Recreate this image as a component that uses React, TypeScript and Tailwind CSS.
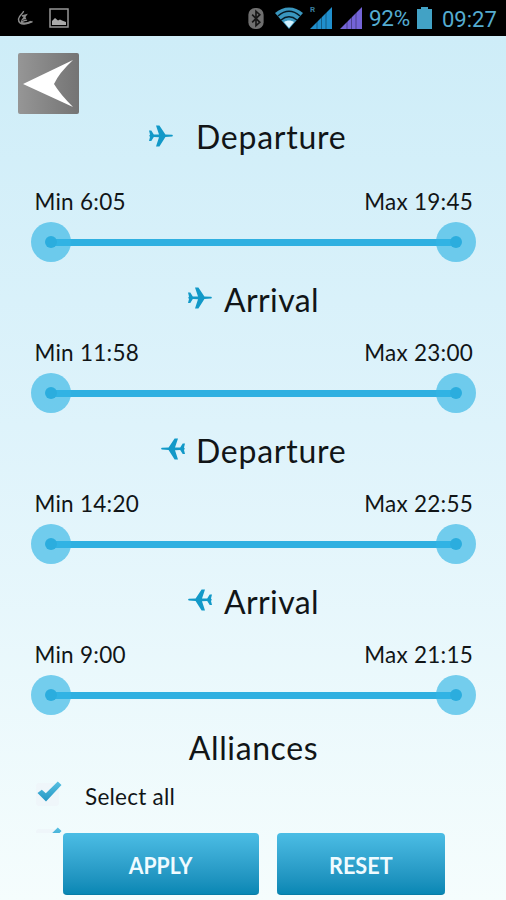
import React from "react";

function Plane({ flip = false }: { flip?: boolean }) {
  return (
    <svg viewBox="0 0 26 24" className={`h-6 w-[26px] ${flip ? "-scale-x-100" : ""}`} fill="#1299c8">
      <path d="M1 6.500h2.300l2.500 4 5.200-.1L8 1.500h3.400l6 9 6.800.3q1.600.9 0 1.800l-6.800.3-6 9.600H8l3-9.300-5.200-.1L3.300 17H1l1-4-.8-1.300.8-1.200z" />
    </svg>
  );
}

function Handle() {
  return (
    <div className="flex size-10 items-center justify-center rounded-full bg-[#33b5e5]/65">
      <div className="size-3 rounded-full bg-[#2badde]" />
    </div>
  );
}

interface RangeProps {
  title: string;
  min: string;
  max: string;
  flip?: boolean;
  wide?: boolean;
  first?: boolean;
}

function Range({ title, min, max, flip, wide, first }: RangeProps) {
  return (
    <section className={first ? "h-[163px]" : "h-[151px]"}>
      <div className={`flex h-10 items-center ${first ? "mb-[29px] pl-[148px]" : wide ? "mb-[17px] pl-[160px]" : "mb-[17px] pl-[187px]"}`}>
        <div className={`shrink-0 ${first ? "mr-[22px] mb-[3px]" : wide ? "mr-[10px] mb-[5px]" : "mr-[11px] mb-[5px]"}`}>
          <Plane flip={flip} />
        </div>
        <h2 className={`whitespace-nowrap text-[32px] leading-10 ${wide ? "tracking-[0.75px]" : "tracking-[0.4px]"}`}>{title}</h2>
      </div>
      <div className="flex h-[30px] items-center justify-between pt-px pr-[33px] pl-[34.500px] text-[22.5px] tracking-[0.25px]">
        <span>Min {min}</span>
        <span>Max {max}</span>
      </div>
      <div className="mr-[30px] ml-[31px] mt-[6px] grid h-10 items-center">
        <div className="col-start-1 row-start-1 mx-5 h-[7px] bg-[#2fb0e1]" />
        <div className="col-start-1 row-start-1 flex justify-between">
          <Handle />
          <Handle />
        </div>
      </div>
    </section>
  );
}

function Check() {
  return (
    <svg viewBox="0 0 30 30" className="size-[30px] shrink-0">
      <defs>
        <linearGradient id="tick" x1="0" y1="0" x2="0" y2="1">
          <stop offset="0" stopColor="#58c0e2" />
          <stop offset="1" stopColor="#2497c4" />
        </linearGradient>
      </defs>
      <rect x="1" y="4" width="23" height="23" rx="3" fill="#eff6fa" />
      <path d="M2.500 14l4.300-3.300 4 3.600L22.800 2.500l3.700 3.500L11 22.500z" fill="url(#tick)" />
    </svg>
  );
}

function Signal({ color }: { color: string }) {
  return (
    <svg viewBox="0 0 22 22" className="h-[22px] w-[22px]">
      <path d="M0 22L22 0v22z" fill={color} />
      <path d="M7 14v8M11.500 9v13M16 5v17" stroke="#000" strokeOpacity=".35" />
    </svg>
  );
}

function StatusBar() {
  return (
    <header className="flex h-9 shrink-0 items-center bg-black font-['Roboto',sans-serif] text-[#55acd0]">
      <svg viewBox="0 0 16 16" className="ml-[17px] h-4 w-4" fill="none" stroke="#8c8c8c" strokeWidth="1.500">
        <path d="M6.500 1C7 3 2 5 1.500 9c-.2 4 3 5.500 6 5 3-.4 5-1.500 8-2.500M5 6l4-1-3 4 3-1M4 11c3 1 4-2 6-.5" />
        <path d="M4 12.500q5 2 10-1" />
      </svg>
      <svg viewBox="0 0 20 20" className="ml-[16px] size-5">
        <rect x="1" y="1" width="18" height="18" fill="none" stroke="#969696" strokeWidth="1.500" />
        <path d="M3 17v-4l3-3 3 2.500 2-1 2 1 4 1.500v3z" fill="#aaa" />
      </svg>
      <svg viewBox="0 0 16 22" className="ml-[179px] h-[21px] w-4">
        <rect width="16" height="22" rx="7" fill="#6f6f6f" />
        <path d="M4 7l8 8-4 3.500v-15L12 7l-8 8" fill="none" stroke="#161616" strokeWidth="1.700" />
      </svg>
      <svg viewBox="0 0 28 22" className="ml-[11px] h-[22px] w-7">
        <path d="M0 6C8-1.500 20-1.500 28 6L14 22z" fill="#3a97bf" />
        <path d="M3 9c7-6 15-6 22 0M6 13c5-4 11-4 16 0" fill="none" stroke="#071a25" strokeWidth="1.600" />
        <path d="M9 15c3-2 7-2 10 0l-5 6z" fill="#d2f2ff" />
      </svg>
      <div className="relative ml-[7px] h-[22px]">
        <Signal color="#208fcd" />
        <span className="absolute top-[-1px] left-0 text-[8px] leading-[8px] font-bold text-[#3a7d9d]">R</span>
      </div>
      <div className="ml-2"><Signal color="#7464d8" /></div>
      <span className="ml-[7px] w-[43px] pt-0.5 text-[22.5px] tracking-[-0.3px]">92%</span>
      <svg viewBox="0 0 15 22" className="ml-[5px] h-[22px] w-[15px]" fill="#42a2c5">
        <path d="M4 0h7v2h4v20H0V2h4z" />
      </svg>
      <span className="ml-[10px] pt-0.5 text-[22px]">09:27</span>
    </header>
  );
}

export default function App() {
  return (
    <div className="flex h-[900px] w-[506px] flex-col overflow-hidden bg-[#f3fcfd] font-['Lato',sans-serif] text-[#111517]">
      <StatusBar />
      <div className="flex min-h-0 flex-1 flex-col bg-linear-to-b from-[#ceedf8] via-[#def3fb] via-45% to-[#f5fdfd]">
        <main className="h-[797px] shrink-0 overflow-hidden">
          <button className="mt-[17px] ml-[18px] block h-[61px] w-[61px] rounded-[2px] bg-linear-to-r from-[#969696] to-[#747474]">
            <svg viewBox="0 0 61 61" className="size-full" fill="#fff">
              <path d="M5 31L55 7Q41 20 36 31q6 10 19 23z" />
            </svg>
          </button>
          <div className="mt-[3px]">
            <Range first wide title="Departure" min="6:05" max="19:45" />
            <Range title="Arrival" min="11:58" max="23:00" />
            <Range wide flip title="Departure" min="14:20" max="22:55" />
            <Range flip title="Arrival" min="9:00" max="21:15" />
          </div>
          <h2 className="-mt-[5px] h-10 pl-px text-center text-[32px] leading-10 tracking-[0.6px]">Alliances</h2>
          <div className="mt-[11px] flex h-[46px] pl-[35px] text-[22.5px] tracking-[0.25px]">
            <Check />
            <span className="mt-px ml-5 leading-[34px]">Select all</span>
          </div>
          <div className="flex pl-[35px]"><Check /></div>
        </main>
        <footer className="flex gap-[18px] pl-[63px] text-[23px] font-bold text-[#f0fbff]">
          <button className="h-[62px] w-[196px] rounded-[4px] border-b border-[#087ca6] bg-linear-to-b from-[#4bbde5] to-[#0787b4] pt-[3px]">
            <span className="inline-block scale-x-[0.92]">APPLY</span>
          </button>
          <button className="h-[62px] w-[168px] rounded-[4px] border-b border-[#087ca6] bg-linear-to-b from-[#4bbde5] to-[#0787b4] pt-[3px]">
            <span className="inline-block scale-x-[0.94]">RESET</span>
          </button>
        </footer>
      </div>
    </div>
  );
}
